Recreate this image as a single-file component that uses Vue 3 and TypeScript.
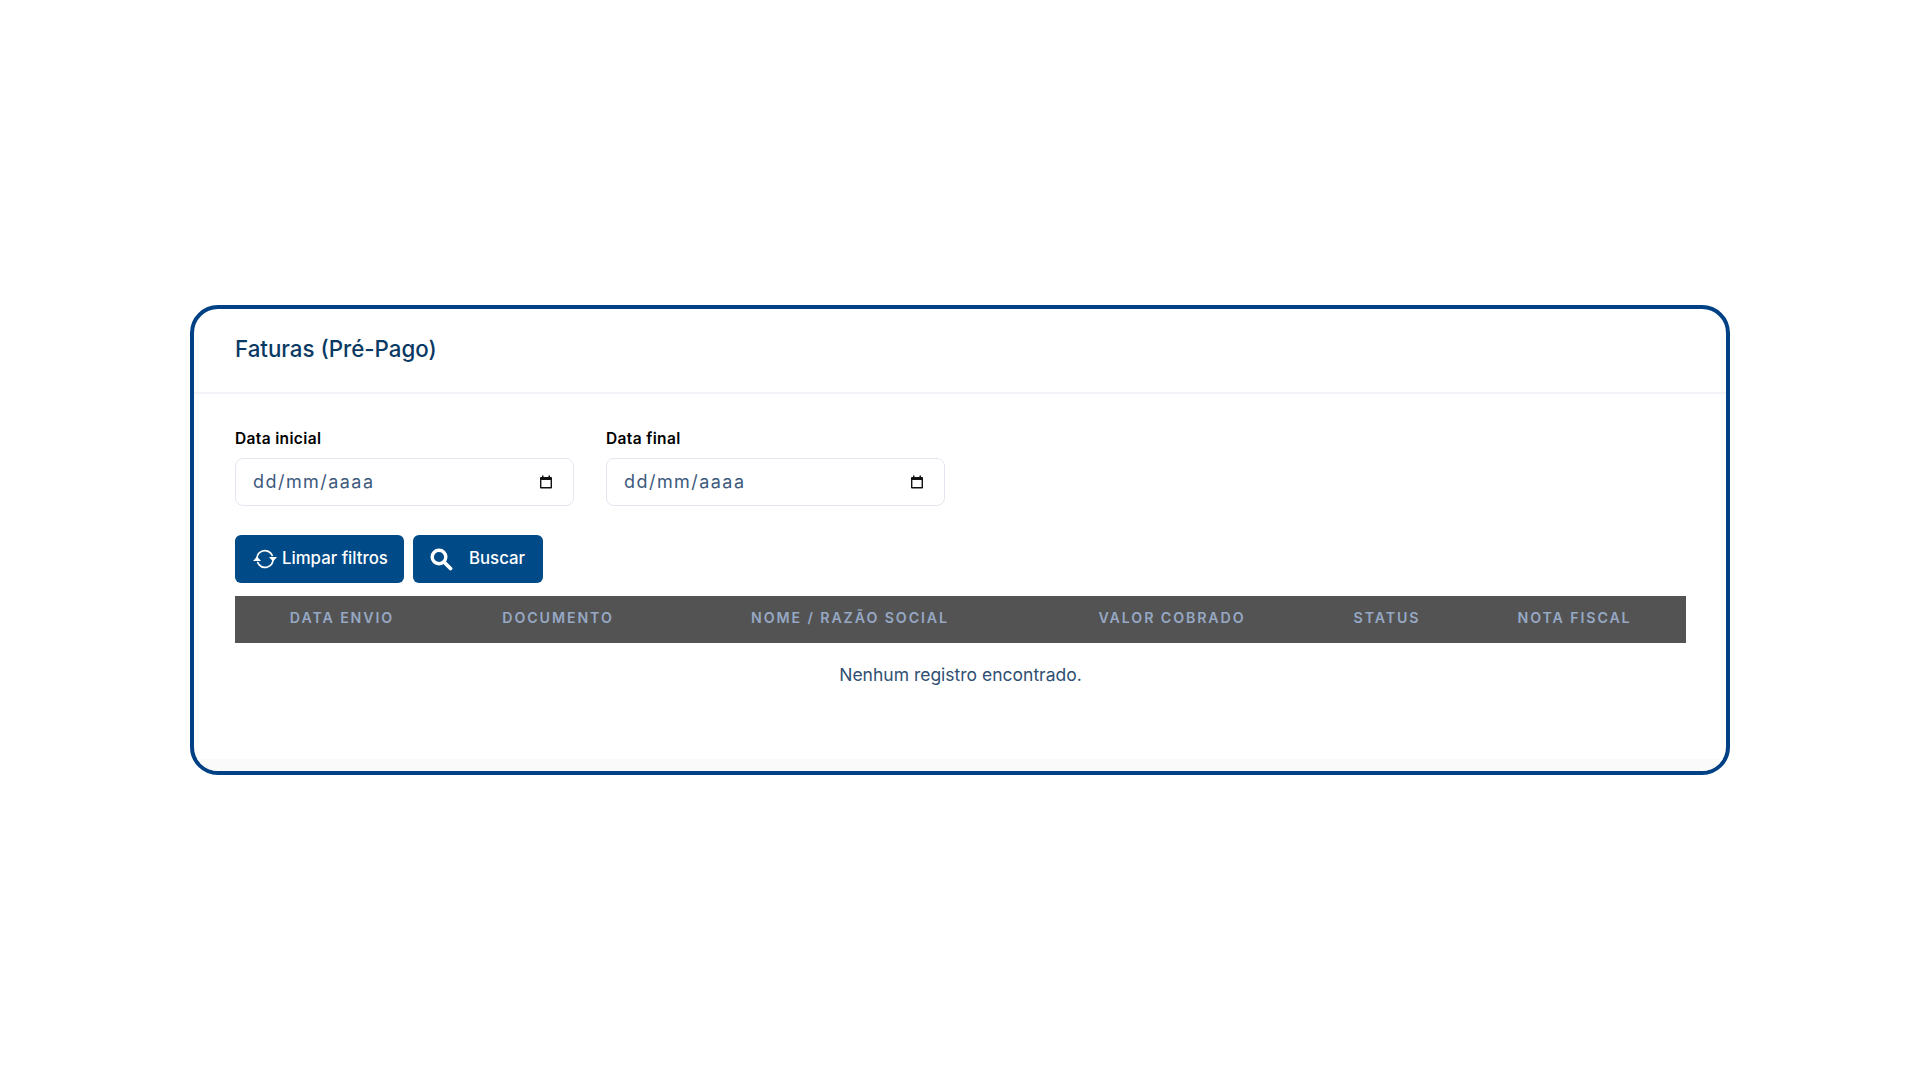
<script setup lang="ts">
const columns: { label: string; width: number }[] = [
  { label: 'DATA ENVIO', width: 214 },
  { label: 'DOCUMENTO', width: 218 },
  { label: 'NOME / RAZÃO SOCIAL', width: 366 },
  { label: 'VALOR COBRADO', width: 278 },
  { label: 'STATUS', width: 152 },
  { label: 'NOTA FISCAL', width: 223 },
]
const fields: string[] = ['Data inicial', 'Data final']
</script>

<template>
  <main class="page">
    <section class="card">
      <header class="card-header">
        <h1 class="title">Faturas (Pré-Pago)</h1>
      </header>
      <div class="card-body">
        <div class="filters">
          <div v-for="f in fields" :key="f" class="field">
            <label class="label">{{ f }}</label>
            <div class="date-input">
              <span class="date-text">dd/mm/aaaa</span>
              <svg class="cal" viewBox="0 0 14 14" width="14" height="14" aria-hidden="true">
                <path d="M3 0.5h1.5V2h5V0.5H11V2h1a1 1 0 0 1 1 1v9.5a1 1 0 0 1-1 1H2a1 1 0 0 1-1-1V3a1 1 0 0 1 1-1h1zM2.4 5v7.1h9.2V5z" fill="#111" fill-rule="evenodd"/>
              </svg>
            </div>
          </div>
        </div>
        <div class="actions">
          <button class="btn btn-clear" type="button">
            <svg viewBox="0 0 24 24" width="24" height="24" fill="none" stroke="#fff" stroke-width="1.7" aria-hidden="true">
              <path d="M4 11a8 8 0 0 1 14-4.6L19.6 9" />
              <path d="M20 13a8 8 0 0 1-14 4.6L4.4 15" />
              <path d="M16 10h8l-4 4.5z" fill="#fff" stroke="none" />
              <path d="M0 14h8L4 9.5z" fill="#fff" stroke="none" />
            </svg>
            <span>Limpar filtros</span>
          </button>
          <button class="btn btn-search" type="button">
            <svg viewBox="0 0 24 24" width="24" height="24" fill="none" stroke="#fff" aria-hidden="true">
              <circle cx="10" cy="10" r="6.8" stroke-width="3.4" />
              <path d="M15 15l6.5 6.5" stroke-width="3.8" stroke-linecap="round" />
            </svg>
            <span>Buscar</span>
          </button>
        </div>
        <table class="table">
          <colgroup>
            <col v-for="c in columns" :key="c.label" :style="{ width: c.width + 'px' }" />
          </colgroup>
          <thead>
            <tr>
              <th v-for="c in columns" :key="c.label">{{ c.label }}</th>
            </tr>
          </thead>
          <tbody>
            <tr>
              <td :colspan="columns.length">Nenhum registro encontrado.</td>
            </tr>
          </tbody>
        </table>
      </div>
      <div class="card-foot"></div>
    </section>
  </main>
</template>

<style>
html, body { background: #fff; }
</style>

<style scoped>
.page {
  min-height: 1080px;
  display: flex;
  align-items: center;
  justify-content: center;
  font-family: Inter, "Liberation Sans", sans-serif;
}
.card {
  box-sizing: border-box;
  width: 1540px;
  height: 470px;
  border: 4px solid #004085;
  border-radius: 28px;
  background: #fff;
  display: flex;
  flex-direction: column;
  overflow: hidden;
}
.card-header {
  box-sizing: border-box;
  height: 85px;
  padding: 22px 41px 0;
  border-bottom: 2px solid #f2f3f6;
}
.title {
  margin: 0;
  font-size: 22.3px;
  line-height: 36px;
  font-weight: 500;
  color: #0a3a63;
}
.card-body {
  flex: 1;
  padding: 35px 41px 0;
}
.filters {
  display: flex;
  gap: 32px;
}
.field {
  width: 339px;
}
.label {
  display: block;
  font-size: 15.5px;
  line-height: 20px;
  font-weight: 600;
  letter-spacing: 0.35px;
  color: #000;
  margin-bottom: 9px;
}
.date-input {
  box-sizing: border-box;
  height: 48px;
  padding: 0 20px 0 17px;
  border: 1px solid #e2e6ee;
  border-radius: 8px;
  display: flex;
  align-items: center;
  justify-content: space-between;
}
.date-text {
  font-size: 18px;
  letter-spacing: 1.45px;
  color: #3d5a7d;
  margin-top: -1px;
}
.cal { display: block; }
.actions {
  display: flex;
  gap: 9px;
  margin-top: 29px;
}
.btn {
  box-sizing: border-box;
  height: 48px;
  border: 0;
  border-radius: 6px;
  background: #004b87;
  color: #fff;
  font: 500 16.8px Inter, "Liberation Sans", sans-serif;
  display: flex;
  align-items: center;
}
.btn span { margin-top: -2px; }
.btn-clear {
  width: 169px;
  padding: 0 0 0 18px;
  gap: 5px;
}
.btn-search {
  width: 130px;
  padding: 0 0 0 16px;
  gap: 16px;
}
.table {
  width: 1451px;
  margin-top: 13px;
  border-collapse: collapse;
  table-layout: fixed;
}
th {
  box-sizing: border-box;
  height: 47px;
  padding: 0 0 4px;
  background: #535353;
  color: #96a8c4;
  font-size: 14.2px;
  font-weight: 600;
  letter-spacing: 1.9px;
  text-align: center;
}
td {
  box-sizing: border-box;
  height: 63px;
  padding: 0;
  text-align: center;
  font-size: 17.5px;
  color: #2f4f73;
}
.card-foot {
  height: 12px;
  background: #fafafa;
}
</style>
